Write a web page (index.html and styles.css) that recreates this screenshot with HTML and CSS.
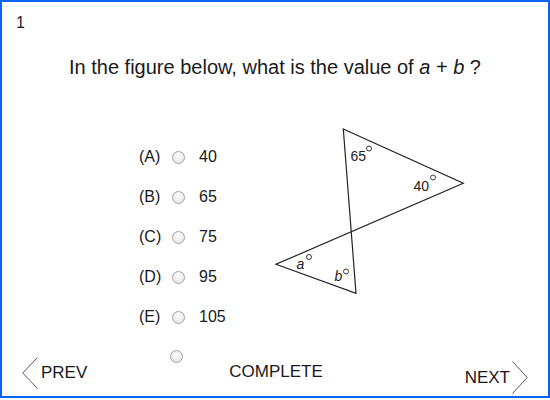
FILE: index.html
```html
<!DOCTYPE html>
<html>
<head>
<meta charset="utf-8">
<link rel="stylesheet" href="styles.css">
</head>
<body>
<div class="frame">
  <div class="num">1</div>
  <div class="question">In the figure below, what is the value of <i>a</i> + <i>b</i> ?</div>
  <div class="main">
    <div class="options">
      <label class="row"><span class="lbl">(A)</span><input type="radio" name="q" class="radio"><span class="val">40</span></label>
      <label class="row"><span class="lbl">(B)</span><input type="radio" name="q" class="radio"><span class="val">65</span></label>
      <label class="row"><span class="lbl">(C)</span><input type="radio" name="q" class="radio"><span class="val">75</span></label>
      <label class="row"><span class="lbl">(D)</span><input type="radio" name="q" class="radio"><span class="val">95</span></label>
      <label class="row"><span class="lbl">(E)</span><input type="radio" name="q" class="radio"><span class="val">105</span></label>
    </div>
    <svg class="figure" width="200" height="180" viewBox="0 0 200 180">
      <path d="M73.3 9 L193.3 63.3 L6 144.3 L86 173.3 Z" fill="none" stroke="#222" stroke-width="1.2" stroke-linejoin="miter"/>
      <text x="80.5" y="40.5" class="fig-t">65</text>
      <circle cx="99" cy="28.5" r="2.5" fill="none" stroke="#222" stroke-width="0.9"/>
      <text x="143.5" y="70.5" class="fig-t">40</text>
      <circle cx="163" cy="57.5" r="2.5" fill="none" stroke="#222" stroke-width="0.9"/>
      <text x="26.5" y="148.5" class="fig-t fig-i">a</text>
      <circle cx="39" cy="137" r="2.5" fill="none" stroke="#222" stroke-width="0.9"/>
      <text x="64.5" y="160.5" class="fig-t fig-i">b</text>
      <circle cx="76" cy="151.5" r="2.5" fill="none" stroke="#222" stroke-width="0.9"/>
    </svg>
  </div>
  <div class="footer">
    <div class="prev">
      <svg class="chev" width="16" height="32" viewBox="0 0 16 32"><path d="M15.5 0.5 L0.8 16 L15.5 31.5" fill="none" stroke="#444" stroke-width="0.9"/></svg>
      <span>PREV</span>
    </div>
    <div class="center">
      <input type="radio" name="q" class="radio">
      <span class="complete">COMPLETE</span>
    </div>
    <div class="next">
      <span>NEXT</span>
      <svg class="chev" width="16" height="33" viewBox="0 0 16 33"><path d="M0.5 0.5 L15.2 16.5 L0.5 32.5" fill="none" stroke="#444" stroke-width="0.9"/></svg>
    </div>
  </div>
</div>
</body>
</html>
```
FILE: styles.css
```css
html, body {
  margin: 0;
  padding: 0;
  background: #fff;
}
body {
  font-family: "Liberation Sans", Arial, sans-serif;
  color: #1a1a1a;
}
.frame {
  width: 550px;
  height: 398px;
  box-sizing: border-box;
  border: 2px solid #0a64fa;
  padding-top: 12px;
  display: flex;
  flex-direction: column;
}
.num {
  margin-left: 14px;
  font-size: 16px;
  line-height: 18px;
}
.question {
  margin-top: 24px;
  font-size: 20px;
  line-height: 22px;
  text-align: center;
}
.main {
  margin-top: 42px;
  display: flex;
  padding-left: 137px;
}
.options {
  width: 131px;
  padding-top: 17px;
  display: flex;
  flex-direction: column;
}
.row {
  height: 40px;
  display: flex;
  align-items: center;
  font-size: 16px;
}
.lbl {
  width: 33px;
}
.radio {
  -webkit-appearance: none;
  appearance: none;
  margin: 0;
  width: 13px;
  height: 13px;
  box-sizing: border-box;
  border: 1px solid #a3a3a3;
  border-radius: 50%;
  background: radial-gradient(circle at 50% 35%, #fbfbfb 0%, #ececec 60%, #dadada 100%);
  flex: none;
}
.val {
  margin-left: 14px;
}
.figure {
  display: block;
  flex: none;
}
.fig-t {
  font-family: "Liberation Sans", Arial, sans-serif;
  font-size: 14px;
  fill: #222;
}
.fig-i {
  font-style: italic;
}
.footer {
  margin-top: 12px;
  display: flex;
  align-items: flex-start;
  padding: 0 20px;
  font-size: 17px;
}
.prev {
  margin-top: 8px;
  display: flex;
  align-items: center;
  gap: 3px;
}
.chev {
  display: block;
}
.center {
  margin-left: 83px;
  display: flex;
  flex-direction: column;
  align-items: flex-start;
  padding-top: 1px;
}
.complete {
  padding-left: 59px;
  line-height: 18px;
}
.next {
  margin-left: auto;
  margin-top: 12px;
  display: flex;
  align-items: center;
  gap: 2px;
}
```
